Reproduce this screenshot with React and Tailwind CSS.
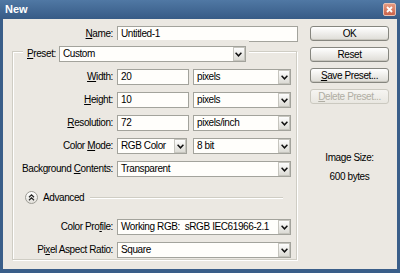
const Chevron = () => (
  <svg width="7" height="5" viewBox="0 0 7 5">
    <path d="M0.6 0.8 L3.5 3.8 L6.4 0.8" fill="none" stroke="#111" strokeWidth="1.5" />
  </svg>
)

const Select = ({ value, className = '' }) => (
  <div className={`flex h-[16px] items-stretch border border-[#a3a39c] bg-[#fffefb] ${className}`}>
    <span className="flex flex-1 items-center truncate pl-[3px]">{value}</span>
    <span className="flex w-[12px] items-center justify-center border border-[#c6c5be] bg-gradient-to-b from-[#fdfdfd] to-[#dcdbd5]">
      <Chevron />
    </span>
  </div>
)

const Input = ({ value, className = '' }) => (
  <div className={`flex h-[16px] items-center border border-[#a3a39c] bg-[#fffefb] pl-[3px] ${className}`}>
    {value}
  </div>
)

const Label = ({ pre = '', u, post = '', className = '' }) => (
  <span className={`whitespace-nowrap ${className}`}>
    {pre}
    <span className="underline underline-offset-[1px]">{u}</span>
    {post}
  </span>
)

const Row = ({ label, children }) => (
  <div className="flex h-[16px] items-center">
    <div className="w-[100px] text-right">{label}</div>
    <div className="ml-[4px] flex items-center">{children}</div>
  </div>
)

const Btn = ({ children, disabled }) => (
  <div
    className={`flex h-[15px] items-center justify-center rounded-[3px] border bg-gradient-to-b ${
      disabled
        ? 'border-[#cbc9c0] from-[#f6f5f2] to-[#e9e7e1] text-[#b0aea4]'
        : 'border-[#86867f] from-[#ffffff] to-[#dedcd6] text-black shadow-[inset_0_-1px_0_#c8c6be]'
    }`}
  >
    {children}
  </div>
)

export default function App() {
  return (
    <div className="flex h-[273px] w-[400px] flex-col bg-[#3a5e89] px-[3px] pb-[4px] font-['Liberation_Sans',Arial,sans-serif] text-[10px] leading-none tracking-[-0.4px] text-black">
      {/* title bar */}
      <div className="-mx-[3px] flex h-[19px] items-center justify-between bg-gradient-to-b from-[#5078a4] to-[#375b86] pl-[5px] pr-[4px]">
        <span className="text-[11px] font-bold tracking-normal text-white">New</span>
        <span className="flex h-[13px] w-[13px] items-center justify-center rounded-[2px] border border-[#e9c2b4] bg-gradient-to-b from-[#e69a80] to-[#c9624a]">
          <svg width="7" height="7" viewBox="0 0 7 7">
            <path d="M1 1 L6 6 M6 1 L1 6" stroke="#fff" strokeWidth="1.8" />
          </svg>
        </span>
      </div>

      {/* body */}
      <div className="flex flex-1 bg-[#ebe8e2] pl-[9px] pr-[8px] pt-[7px]">
        {/* left column */}
        <div className="flex w-[286px] flex-col">
          <div className="flex h-[16px] items-center">
            <div className="w-[101px] text-right">
              <Label u="N" post="ame:" />
            </div>
            <Input value="Untitled-1" className="ml-[4px] w-[181px]" />
          </div>

          <fieldset className="mt-[-2px] w-[285px] border border-[#cfcdc4] pb-[1px] shadow-[inset_1px_1px_0_#fff,1px_1px_0_#fff]">
            <legend className="ml-[10px] bg-[#ebe8e2] pl-[4px] pr-[3px] pt-[6px]">
              <div className="flex items-center">
                <Label u="P" post="reset:" />
                <Select value="Custom" className="ml-[3px] w-[187px]" />
              </div>
            </legend>

            <div className="mt-[7px] flex flex-col gap-[7px]">
              <Row label={<Label u="W" post="idth:" />}>
                <Input value="20" className="w-[72px]" />
                <Select value="pixels" className="ml-[4px] w-[98px]" />
              </Row>
              <Row label={<Label u="H" post="eight:" />}>
                <Input value="10" className="w-[72px]" />
                <Select value="pixels" className="ml-[4px] w-[98px]" />
              </Row>
              <Row label={<Label u="R" post="esolution:" />}>
                <Input value="72" className="w-[72px]" />
                <Select value="pixels/inch" className="ml-[4px] w-[98px]" />
              </Row>
              <Row label={<Label pre="Color " u="M" post="ode:" />}>
                <Select value="RGB Color" className="w-[70px]" />
                <Select value="8 bit" className="ml-[6px] w-[98px]" />
              </Row>
              <Row label={<Label pre="Background " u="C" post="ontents:" />}>
                <Select value="Transparent" className="w-[174px]" />
              </Row>
            </div>

            <div className="ml-[12px] mr-[13px] mt-[14px] flex h-[13px] items-center">
              <span className="flex h-[13px] w-[13px] items-center justify-center rounded-full border border-[#9d9c95] bg-gradient-to-b from-[#ffffff] to-[#e2e0da]">
                <svg width="7" height="7" viewBox="0 0 7 7">
                  <path d="M1 3.3 L3.5 0.9 L6 3.3 M1 6.3 L3.5 3.9 L6 6.3" fill="none" stroke="#222" strokeWidth="1.2" />
                </svg>
              </span>
              <span className="ml-[5px]">Advanced</span>
              <span className="ml-[6px] h-[2px] flex-1 border-t border-[#cfcdc4] bg-white" />
            </div>

            <div className="mt-[15px] flex flex-col gap-[7px]">
              <Row label={<Label pre="Color Pro" u="f" post="ile:" />}>
                <Select value={'Working RGB:\u00a0 sRGB IEC61966-2.1'} className="w-[174px]" />
              </Row>
              <Row label={<Label pre="Pi" u="x" post="el Aspect Ratio:" />}>
                <Select value="Square" className="w-[174px]" />
              </Row>
            </div>
          </fieldset>
        </div>

        {/* right column */}
        <div className="ml-[12px] flex w-[79px] flex-col">
          <div className="flex flex-col gap-[6px]">
            <Btn>OK</Btn>
            <Btn>Reset</Btn>
            <Btn>
              <Label u="S" post="ave Preset..." />
            </Btn>
            <Btn disabled>
              <Label u="D" post="elete Preset..." />
            </Btn>
          </div>
          <div className="mt-[49px] text-center">Image Size:</div>
          <div className="mt-[9px] text-center">600 bytes</div>
        </div>
      </div>
    </div>
  )
}
